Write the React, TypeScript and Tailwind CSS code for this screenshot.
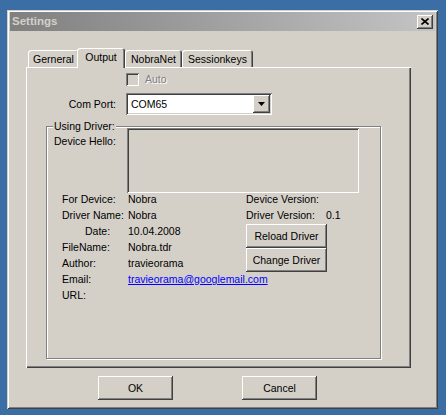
import React from "react";

const raised =
  "shadow-[inset_-1px_-1px_0_#404040,inset_1px_1px_0_#ffffff,inset_-2px_-2px_0_#808080,inset_2px_2px_0_#d4d0c8]";
const sunken =
  "shadow-[inset_1px_1px_0_#808080,inset_-1px_-1px_0_#ffffff,inset_2px_2px_0_#404040,inset_-2px_-2px_0_#d4d0c8]";
const tabShadow =
  "shadow-[inset_1px_1px_0_#ffffff,inset_-1px_0_0_#404040,inset_-2px_0_0_#808080]";

function Tab({ label, w, selected }: { label: string; w: string; selected?: boolean }) {
  if (selected) {
    return (
      <div
        className={`relative z-10 -ml-[2px] flex h-[20px] ${w} items-center justify-center rounded-t-[3px] bg-[#d4d0c8] pb-[2px] ${tabShadow}`}
      >
        {label}
      </div>
    );
  }
  return (
    <div
      className={`flex h-[18px] ${w} items-center justify-center rounded-t-[3px] bg-[#d4d0c8] ${tabShadow}`}
    >
      {label}
    </div>
  );
}

function Row({ label, value, labelClass }: { label: string; value?: React.ReactNode; labelClass?: string }) {
  return (
    <div className="flex h-[12px] items-center whitespace-nowrap leading-[12px]">
      <div className={`w-[66px] shrink-0 ${labelClass ?? ""}`}>{label}</div>
      <div>{value}</div>
    </div>
  );
}

export default function App() {
  return (
    <div className="h-[415px] w-[446px] overflow-hidden bg-[#3a6ea5] pl-[7px] pt-[10px] font-['Liberation_Sans',Arial,sans-serif] text-[10.5px] leading-[13px] text-black">
      <div className="flex h-[399px] w-[431px] flex-col bg-[#d4d0c8] px-[3px] pt-[2px] shadow-[inset_1px_1px_0_#d4d0c8,inset_-1px_-1px_0_#404040,inset_2px_2px_0_#ffffff,inset_-2px_-2px_0_#808080]">
        {/* Title bar */}
        <div className="flex h-[19px] items-center justify-between bg-linear-to-r from-[#808080] to-[#c4c4c4] pl-[2px] pr-[2px]">
          <span className="text-[11.5px] font-bold text-[#d4d0c8]">Settings</span>
          <div className={`flex h-[14px] w-[16px] items-center justify-center bg-[#d4d0c8] ${raised}`}>
            <svg width="8" height="7" viewBox="0 0 8 7" className="-ml-[1px]">
              <path d="M0.5 0.5 L7.5 6.5 M7.5 0.5 L0.5 6.5" stroke="#000" strokeWidth="1.6" />
            </svg>
          </div>
        </div>

        {/* Tabs */}
        <div className="mt-[17px] flex h-[20px] items-end pl-[18px]">
          <Tab label="Gerneral" w="w-[51px]" />
          <Tab label="Output" w="w-[48px]" selected />
          <Tab label="NobraNet" w="w-[57px]" />
          <Tab label="Sessionkeys" w="w-[71px]" />
        </div>

        {/* Panel */}
        <div className="ml-[16px] -mt-[1px] flex h-[301px] w-[385px] flex-col pt-[6px] shadow-[inset_1px_1px_0_#ffffff,inset_-1px_-1px_0_#404040,inset_-2px_-2px_0_#808080]">
          {/* Auto */}
          <div className="ml-[100px] flex h-[13px] items-center">
            <div className={`h-[13px] w-[13px] bg-[#d4d0c8] ${sunken}`} />
            <span className="ml-[6px] text-[#808080] [text-shadow:1px_1px_0_#ffffff]">Auto</span>
          </div>

          {/* Com Port */}
          <div className="mt-[7px] flex h-[22px] items-center">
            <div className="w-[90px] text-right">Com Port:</div>
            <div className={`ml-[10px] flex h-[22px] w-[146px] items-center bg-white p-[2px] ${sunken}`}>
              <span className="flex-1 pl-[3px]">COM65</span>
              <div className={`flex h-[18px] w-[17px] items-center justify-center bg-[#d4d0c8] ${raised}`}>
                <svg width="7" height="4" viewBox="0 0 7 4">
                  <path d="M0 0 H7 L3.5 4 Z" fill="#000" />
                </svg>
              </div>
            </div>
          </div>

          {/* Group box */}
          <div className="relative ml-[20px] mt-[11px] h-[233px] w-[335px] border border-[#808080] shadow-[inset_1px_1px_0_#ffffff,1px_1px_0_#ffffff]">
            <span className="absolute -top-[7px] left-[6px] bg-[#d4d0c8] px-[1px]">Using Driver:</span>

            <div className="mt-[1px] flex pl-[7px]">
              <div className="w-[73px] pt-[7px]">Device Hello:</div>
              <div className={`h-[65px] w-[232px] bg-[#d4d0c8] ${sunken}`} />
            </div>

            <div className="flex pl-[15px]">
              <div className="flex w-[184px] shrink-0 flex-col gap-[4px]">
                <Row label="For Device:" value="Nobra" />
                <Row label="Driver Name:" value="Nobra" />
                <Row label="Date:" value="10.04.2008" labelClass="pl-[23px]" />
                <Row label="FileName:" value="Nobra.tdr" />
                <Row label="Author:" value="travieorama" />
                <Row
                  label="Email:"
                  value={<span className="text-[#0000ff] underline">travieorama@googlemail.com</span>}
                />
                <Row label="URL:" />
              </div>
              <div className="flex flex-col">
                <div className="flex h-[12px] items-center whitespace-nowrap leading-[12px]">Device Version:</div>
                <div className="mt-[4px] flex h-[12px] items-center whitespace-nowrap leading-[12px]">
                  <span className="w-[80px]">Driver Version:</span>
                  <span>0.1</span>
                </div>
                <div className={`mt-[3px] flex h-[24px] w-[81px] items-center justify-center bg-[#d4d0c8] ${raised}`}>
                  Reload Driver
                </div>
                <div className={`flex h-[24px] w-[81px] items-center justify-center bg-[#d4d0c8] ${raised}`}>
                  Change Driver
                </div>
              </div>
            </div>
          </div>
        </div>

        {/* Bottom buttons */}
        <div className="mt-[8px] flex pl-[88px]">
          <div className={`flex h-[24px] w-[75px] items-center justify-center bg-[#d4d0c8] ${raised}`}>OK</div>
          <div className={`ml-[69px] flex h-[24px] w-[75px] items-center justify-center bg-[#d4d0c8] ${raised}`}>
            Cancel
          </div>
        </div>
      </div>
    </div>
  );
}
